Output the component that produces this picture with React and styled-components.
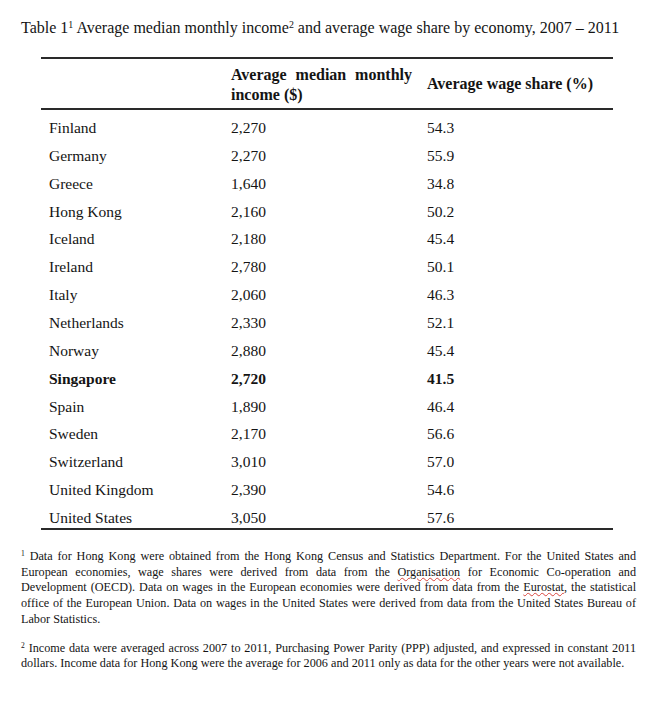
import React from "react";
import styled, { createGlobalStyle } from "styled-components";

const Global = createGlobalStyle`
  html, body { margin: 0; padding: 0; background: #fff; }
  body { font-family: "Liberation Serif", "Times New Roman", serif; color: #141414; }
`;

const Page = styled.div`
  width: 663px;
  height: 704px;
  padding-top: 19px;
  box-sizing: border-box;
  background: #fff;
`;

const Title = styled.div`
  margin-left: 21px;
  font-size: 16px;
  line-height: 18px;
  white-space: nowrap;
`;

const Sup = styled.sup`
  font-size: 0.62em;
  line-height: 0;
  vertical-align: 0.55em;
`;

const TableBox = styled.div`
  margin: 20px 0 0 41px;
  width: 572px;
  border-top: 2px solid #2a2a2a;
  border-bottom: 2px solid #2a2a2a;
`;

const HeadRow = styled.div`
  display: grid;
  grid-template-columns: 190px 196px 186px;
  height: 51px;
  box-sizing: border-box;
  border-bottom: 2px solid #2a2a2a;
  align-items: center;
  font-weight: bold;
  font-size: 16px;
  line-height: 20px;
`;

const HeadCell = styled.div`
  padding-right: ${(p) => p.$pr || 0}px;
  padding-top: ${(p) => p.$pt || 0}px;
  text-align: justify;
`;

const Body = styled.div`
  display: grid;
  grid-template-columns: 190px 196px 186px;
  grid-template-rows: repeat(14, 27.86px) 20px;
  padding-top: 8px;
  font-size: 15.5px;
  line-height: 20px;
`;

const Cell = styled.div`
  padding-left: ${(p) => (p.$first ? 8 : 0)}px;
  font-weight: ${(p) => (p.$bold ? "bold" : "normal")};
  white-space: nowrap;
`;

const Notes = styled.div`
  margin: 19px 0 0 21px;
  width: 615px;
  font-size: 12.2px;
  line-height: 15.7px;
`;

const Note = styled.div`
  margin-top: ${(p) => p.$mt || 0}px;
`;

const Line = styled.span`
  display: block;
  text-align: justify;
  text-align-last: ${(p) => (p.$last ? "left" : "justify")};
`;

const Spell = styled.span`
  text-decoration: underline wavy #d8443c;
  text-decoration-thickness: 1px;
  text-underline-offset: 1px;
`;

const rows = [
  ["Finland", "2,270", "54.3"],
  ["Germany", "2,270", "55.9"],
  ["Greece", "1,640", "34.8"],
  ["Hong Kong", "2,160", "50.2"],
  ["Iceland", "2,180", "45.4"],
  ["Ireland", "2,780", "50.1"],
  ["Italy", "2,060", "46.3"],
  ["Netherlands", "2,330", "52.1"],
  ["Norway", "2,880", "45.4"],
  ["Singapore", "2,720", "41.5", true],
  ["Spain", "1,890", "46.4"],
  ["Sweden", "2,170", "56.6"],
  ["Switzerland", "3,010", "57.0"],
  ["United Kingdom", "2,390", "54.6"],
  ["United States", "3,050", "57.6"],
];

export default function App() {
  return (
    <>
      <Global />
      <Page>
        <Title>
          Table 1<Sup>1</Sup> Average median monthly income<Sup>2</Sup> and average wage share by economy, 2007 – 2011
        </Title>
        <TableBox>
          <HeadRow>
            <HeadCell />
            <HeadCell $pr={15} $pt={3}>Average median monthly income ($)</HeadCell>
            <HeadCell>Average wage share (%)</HeadCell>
          </HeadRow>
          <Body>
            {rows.map(([c, inc, w, b]) => (
              <React.Fragment key={c}>
                <Cell $first $bold={b}>{c}</Cell>
                <Cell $bold={b}>{inc}</Cell>
                <Cell $bold={b}>{w}</Cell>
              </React.Fragment>
            ))}
          </Body>
        </TableBox>
        <Notes>
          <Note>
            <Line><Sup>1</Sup> Data for Hong Kong were obtained from the Hong Kong Census and Statistics Department. For the United States and</Line>
            <Line>European economies, wage shares were derived from data from the <Spell>Organisation</Spell> for Economic Co-operation and</Line>
            <Line>Development (OECD). Data on wages in the European economies were derived from data from the <Spell>Eurostat</Spell>, the statistical</Line>
            <Line>office of the European Union. Data on wages in the United States were derived from data from the United States Bureau of</Line>
            <Line $last>Labor Statistics.</Line>
          </Note>
          <Note $mt={13}>
            <Line><Sup>2</Sup> Income data were averaged across 2007 to 2011, Purchasing Power Parity (PPP) adjusted, and expressed in constant 2011</Line>
            <Line $last>dollars. Income data for Hong Kong were the average for 2006 and 2011 only as data for the other years were not available.</Line>
          </Note>
        </Notes>
      </Page>
    </>
  );
}
